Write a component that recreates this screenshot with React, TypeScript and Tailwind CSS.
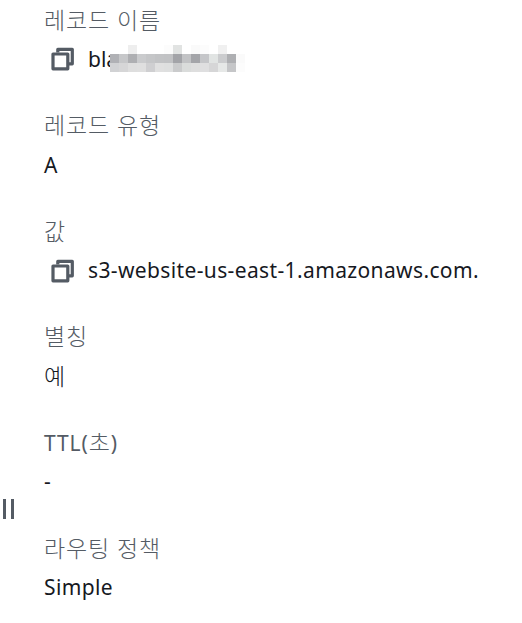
import type { ReactNode } from "react";

const mosaic = [
    ["#ffffff", "#ffffff", "#eeeeee", "#ffffff", "#ffffff", "#ffffff", "#fcfcfc", "#e1e3e2", "#ffffff", "#fafafa", "#fcfcfc", "#ffffff", "#f0f0f0", "#ffffff", "#ffffff"],
    ["#b0b1b5", "#c6c7c9", "#aeafb2", "#cacbcd", "#c5c6c8", "#c2c3c5", "#c1c2c4", "#a3a4a8", "#c2c3c5", "#a4a5a9", "#c5c6c9", "#e1e4e3", "#cbccce", "#aeafb2", "#fafafa"],
    ["#d1d2d4", "#d6d6d7", "#dedede", "#dfdfdf", "#cfcfd1", "#e0e0e0", "#dedfdf", "#cacbcc", "#dadcdb", "#dedede", "#dfdfe0", "#d6d6d7", "#e6e8e7", "#c5c6c8", "#fcfcfc"],
];

function CopyIcon() {
    return (
        <div className="flex w-[44px] shrink-0 pl-[7px]">
            <svg className="h-6 w-6 shrink-0" viewBox="0 0 24 24" fill="none" stroke="#545b64" strokeWidth="3.2">
                <path d="M6.8 5.5V2.3H21.3V16.8H18" strokeLinejoin="round" />
                <rect x="2" y="7" width="14.8" height="14.8" strokeLinejoin="round" />
            </svg>
        </div>
    );
}

function Field({ label, children }: { label: ReactNode; children: ReactNode }) {
    return (
        <div className="h-[105.6px] shrink-0">
            <div className="h-[40.3px] text-[23px] leading-10 font-light tracking-[0.9px] whitespace-nowrap text-[#545b64]">{label}</div>
            <div className="flex h-[39px] items-center text-[21px] leading-[39px] tracking-[0.37px] whitespace-nowrap text-[#16191f]">
                {children}
            </div>
        </div>
    );
}

export default function App() {
    return (
        <div className="flex h-[623px] w-[522px] overflow-hidden bg-white font-['Noto_Sans','Noto_Sans_CJK_KR',sans-serif]">
            <div className="flex w-[44px] shrink-0 gap-[5px] pt-[499px] pl-[3px]">
                <div className="h-5 w-[3px] bg-[#545b64]" />
                <div className="h-5 w-[3px] bg-[#545b64]" />
            </div>
            <div className="-mt-[0.4px] flex flex-col">
                <Field label="레코드 이름">
                    <CopyIcon />
                    <span className="w-[22px] tracking-normal">bla</span>
                    {/* pixelated part of the domain, covers the end of the text */}
                    <div className="relative mb-[2px] grid grid-cols-[repeat(15,9px)]">
                        {mosaic.flat().map((color, i) => (
                            <div key={i} className="h-[9px]" style={{ backgroundColor: color }} />
                        ))}
                    </div>
                </Field>
                <Field label="레코드 유형">A</Field>
                <Field label="값">
                    <CopyIcon />
                    <span>s3-website-us-east-1.amazonaws.com.</span>
                </Field>
                <Field label="별칭">
                    <span className="text-[23px] font-light">예</span>
                </Field>
                <Field
                    label={
                        <>
                            <span className="text-[21px] font-normal">TTL(</span>초<span className="text-[21px] font-normal">)</span>
                        </>
                    }
                >
                    -
                </Field>
                <Field label="라우팅 정책">Simple</Field>
            </div>
        </div>
    );
}
